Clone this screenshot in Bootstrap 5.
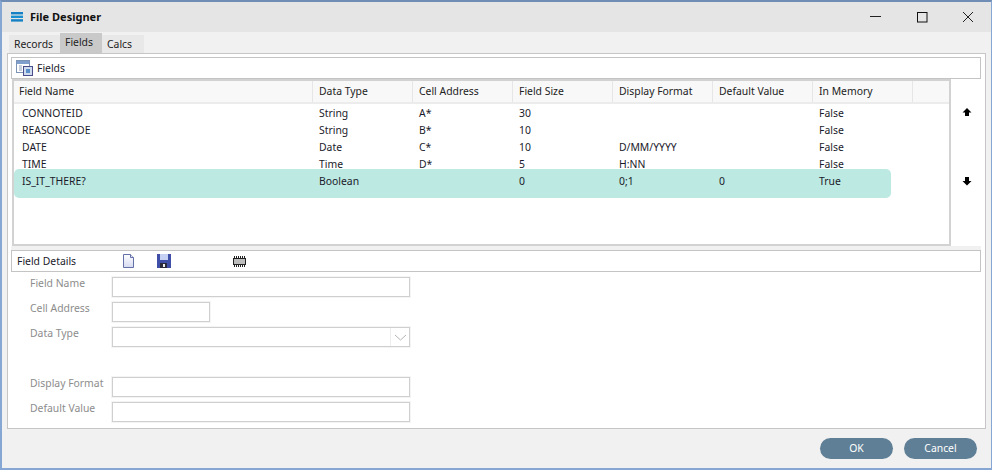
<!DOCTYPE html>
<html lang="en"><head><meta charset="utf-8"><title>File Designer</title>
<link href="https://cdn.jsdelivr.net/npm/bootstrap@5.3.0/dist/css/bootstrap.min.css" rel="stylesheet">
<style>
html,body{height:470px;overflow:hidden}
body{font-family:"Noto Sans","Liberation Sans",sans-serif;font-size:10.4px;color:#1a1a2a;background:#f0f0f0}
.win{width:992px;height:470px;border:1px solid #86a6d4;border-left-width:2px;border-top:2px solid #6f8db5;border-bottom-width:2px;background:#f1f1f1;display:flex;flex-direction:column}
.tbar{height:30px;background:#e5e5e5;padding-left:9px}
.tbar b{font-size:11px;margin-left:5px;color:#111}
.wbtns{margin-left:auto;display:flex}
.wbtns span{width:46px;height:30px;display:flex;align-items:center;justify-content:center}
.tabrow{height:20px;margin:1px 0 0 7px}
.tb{width:42px;padding-left:5px;height:18px;margin-top:2px;background:#e8e8e8;line-height:19px;color:#222}
.tb:first-child{width:51px}
.tb.on{background:#c9c9c9;height:20px;margin-top:0;line-height:18px}
.panel{margin-left:5px;width:979px;height:376px;background:#fff;border:1px solid #c6c6c6;padding:3px}
.hbar{height:22px;width:970px;background:#fff;border:1px solid #c4c4c4;display:flex;align-items:center}
.hbar span{padding-top:2px}
.gridrow{height:167px;width:970px}
.gapstrip{height:4px;width:970px;background:#f1f1f1}
.grid{width:940px;height:167px;margin-left:1px;border:2px solid #d2d2d2;background:#fff}
.hrow{height:23px;background:#f8f8f8;border-bottom:2px solid #ececec}
.hrow span{line-height:21px;border-right:1px solid #e6e6e6;padding-left:6px;flex:0 0 100px;color:#222}
.hrow span.c0,.drow span.c0{flex:0 0 299px}
.hrow span.c0{padding-left:5px}
.hrow span.cl{flex:0 0 36px;border:0}
.rows{padding-top:1px}
.drow{height:17px;line-height:17px}
.drow span{flex:0 0 100px;padding-left:6px}
.drow span.c0{padding-left:8px}
.drow.sel{height:29px;margin-top:-4px;width:877px;background:#bce9e2;border-radius:5px;line-height:25px;position:relative;z-index:0}
.drow.up{position:relative;z-index:1}
.arrows{width:30px;height:167px;position:relative}
.arrows svg{position:absolute;left:11px}
.frm{height:150px;padding-top:5px;width:970px}
.frow{height:25px;display:flex}
.frow label{width:101px;padding-left:19px;color:#8c8c8c;line-height:13px}
.fi{height:20px;width:298px;border:1px solid #cfcfcf;background:#fff;box-shadow:0 0 0 1px #f4f4f4;position:relative}
.fi.sm{width:98px}
.caret{position:absolute;right:0;top:0;bottom:0;width:19px;border-left:1px solid #eee;display:flex;align-items:center;justify-content:center}
.foot{padding:9px 14px 0 0;gap:11px}
.okb{width:73px;height:21px;border-radius:11px;background:#5f7f96;color:#fff;border:0;padding:0;font-size:10.4px;line-height:21px}
</style></head><body>
<div class="win">
 <div class="tbar d-flex align-items-center">
  <svg width="14" height="10" viewBox="0 0 14 10"><rect y="0" width="12" height="2.4" fill="#1581c4"/><rect y="3.6" width="12" height="2.4" fill="#1a8fd0"/><rect y="7.2" width="12" height="2.4" fill="#1581c4"/></svg>
  <b>File Designer</b>
  <div class="wbtns">
   <span><svg width="12" height="2"><rect width="11" height="1" y="0" fill="#222"/></svg></span>
   <span><svg width="11" height="11"><rect x=".5" y=".5" width="9.500" height="9.500" fill="none" stroke="#111"/></svg></span>
   <span><svg width="12" height="12"><path d="M1 1l10 10M11 1L1 11" stroke="#222" fill="none"/></svg></span>
  </div>
 </div>
 <div class="tabrow d-flex">
  <div class="tb">Records</div><div class="tb on">Fields</div><div class="tb">Calcs</div>
 </div>
 <div class="panel">
  <div class="hbar"><svg class="ms-1" width="17" height="16" viewBox="0 0 17 16"><rect x=".5" y=".5" width="13" height="12" fill="#fff" stroke="#7d93b5"/><rect x="1" y="1" width="12" height="3" fill="#7fa0cc"/><path d="M3 6h3M3 8h3M3 10h3" stroke="#8da0b8"/><rect x="7.500" y="6.500" width="9" height="9" fill="#cfdcf0" stroke="#4a4f8c"/><rect x="10" y="9" width="4" height="4" fill="#5b8fc8"/></svg><span class="ms-1">Fields</span></div>
  <div class="gridrow d-flex">
   <div class="grid">
    <div class="hrow d-flex"><span class="c0">Field Name</span><span>Data Type</span><span>Cell Address</span><span>Field Size</span><span>Display Format</span><span>Default Value</span><span>In Memory</span><span class="cl"></span></div>
    <div class="rows">
     <div class="drow d-flex"><span class="c0">CONNOTEID</span><span>String</span><span>A*</span><span>30</span><span></span><span></span><span>False</span></div>
     <div class="drow d-flex"><span class="c0">REASONCODE</span><span>String</span><span>B*</span><span>10</span><span></span><span></span><span>False</span></div>
     <div class="drow d-flex"><span class="c0">DATE</span><span>Date</span><span>C*</span><span>10</span><span>D/MM/YYYY</span><span></span><span>False</span></div>
     <div class="drow d-flex up"><span class="c0">TIME</span><span>Time</span><span>D*</span><span>5</span><span>H:NN</span><span></span><span>False</span></div>
     <div class="drow d-flex sel"><span class="c0">IS_IT_THERE?</span><span>Boolean</span><span></span><span>0</span><span>0;1</span><span>0</span><span>True</span></div>
    </div>
   </div>
   <div class="arrows">
    <svg style="top:29px" width="10" height="9" viewBox="0 0 10 9"><path d="M5 0l4.500 4.500H7V8H3V4.500H.5z" fill="#000"/></svg>
    <svg style="top:98px" width="10" height="9" viewBox="0 0 10 9"><path d="M3 0h4v4h2.500L5 8.500.5 4H3z" fill="#000"/></svg>
   </div>
  </div>
  <div class="gapstrip"></div>
  <div class="hbar"><span style="margin-left:5px;width:105px">Field Details</span>
   <svg width="13" height="15" viewBox="0 0 13 15"><defs><linearGradient id="dg" x1="0" y1="0" x2="0" y2="1"><stop offset="0" stop-color="#fff"/><stop offset="1" stop-color="#d5daf0"/></linearGradient></defs><path d="M1.500.5h7l3 3v10h-10z" fill="url(#dg)" stroke="#6470a8"/><path d="M8.500.5v3h3" fill="#dfe4f2" stroke="#6470a8"/></svg>
   <svg style="margin-left:22px" width="14" height="14" viewBox="0 0 14 14"><rect width="14" height="14" fill="#3f4fa8"/><rect x="3" y="0" width="8" height="6" fill="#c6d0f2"/><rect x="3" y="9" width="7" height="5" fill="#2a2a3a"/><rect x="6" y="10" width="2" height="3" fill="#eee"/></svg>
   <svg style="margin-left:62px" width="13" height="11" viewBox="0 0 13 11"><rect x=".5" y="2.500" width="12" height="6" fill="#bdbdbd" stroke="#222"/><path d="M1.500 0v2M3.500 0v2M5.500 0v2M7.500 0v2M9.500 0v2M11.500 0v2M1.500 9v2M3.500 9v2M5.500 9v2M7.500 9v2M9.500 9v2M11.500 9v2" stroke="#222"/></svg>
  </div>
  <div class="frm">
   <div class="frow"><label>Field Name</label><div class="fi"></div></div>
   <div class="frow"><label>Cell Address</label><div class="fi sm"></div></div>
   <div class="frow"><label>Data Type</label><div class="fi"><div class="caret"><svg width="13" height="7" viewBox="0 0 13 7"><path d="M1 1l5.500 5L12 1" fill="none" stroke="#b5b5b5"/></svg></div></div></div>
   <div class="frow"></div>
   <div class="frow"><label>Display Format</label><div class="fi"></div></div>
   <div class="frow"><label>Default Value</label><div class="fi"></div></div>
  </div>
 </div>
 <div class="foot d-flex justify-content-end">
  <button class="btn okb">OK</button><button class="btn okb">Cancel</button>
 </div>
</div>
<script src="https://cdn.jsdelivr.net/npm/bootstrap@5.3.0/dist/js/bootstrap.bundle.min.js"></script>
</body></html>
